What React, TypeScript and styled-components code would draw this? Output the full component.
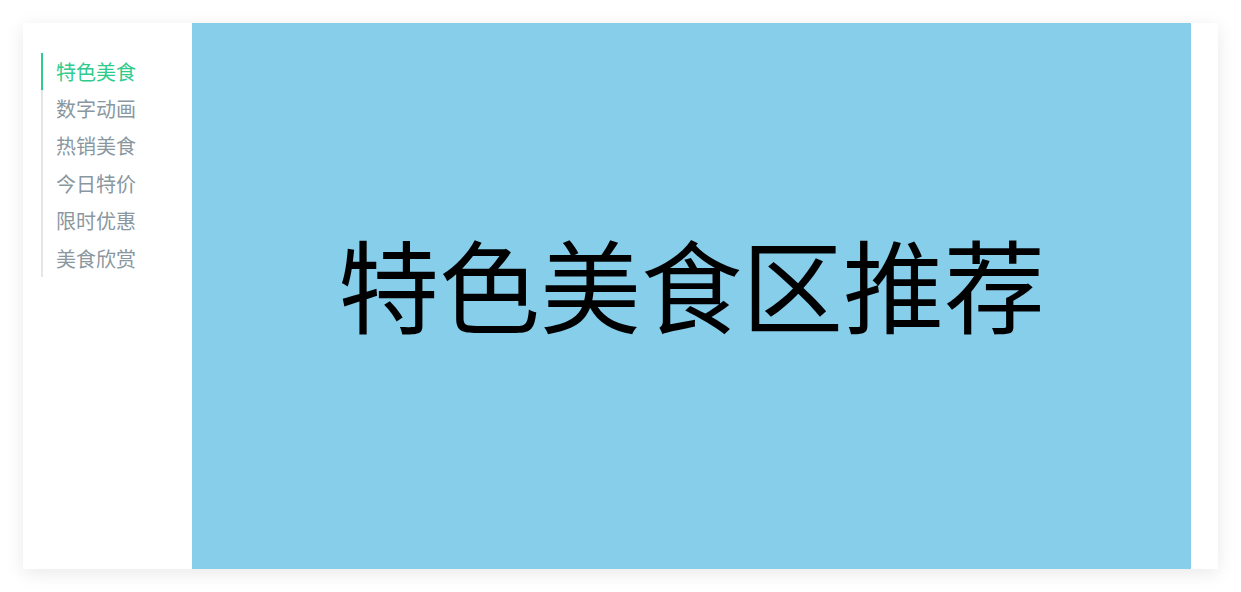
import { useState } from "react";
import styled, { createGlobalStyle } from "styled-components";

const GlobalStyle = createGlobalStyle`
    body {
        margin: 0;
        background: #ffffff;
        font-family: "Noto Sans CJK SC", "Noto Sans", sans-serif;
    }
`;

const Page = styled.div`
    padding: 23px;
`;

const Card = styled.div`
    width: 1195px;
    height: 546px;
    display: grid;
    grid-template-columns: 169px 999px;
    background-color: #ffffff;
    box-shadow: 0 4px 18px rgba(0, 0, 0, 0.09);
`;

const Side = styled.aside`
    padding: 30px 0 0 18px;
`;

const Nav = styled.nav`
    display: flex;
    flex-direction: column;
    border-left: 2px solid #e3e5e7;
`;

const NavItem = styled.a<{ $active: boolean }>`
    height: 37.4px;
    display: flex;
    align-items: center;
    padding-left: 13px;
    margin-left: -2px;
    border-left: 2px solid ${(p) => (p.$active ? "#2ecb8c" : "transparent")};
    color: ${(p) => (p.$active ? "#2ecb8c" : "#8a979f")};
    font-size: 20px;
    line-height: 1;
    text-decoration: none;
    cursor: pointer;
`;

const Panel = styled.section`
    background-color: #87ceeb;
    display: flex;
    align-items: center;
    justify-content: center;
`;

const Title = styled.h1`
    margin: 0 0 28px;
    font-size: 101px;
    font-weight: 400;
    color: #000000;
    line-height: 1;
`;

const items = ["特色美食", "数字动画", "热销美食", "今日特价", "限时优惠", "美食欣赏"];

function App() {
    const [active, setActive] = useState(0);

    return (
        <Page>
            <GlobalStyle />
            <Card>
                <Side>
                    <Nav>
                        {items.map((name, i) => (
                            <NavItem key={name} $active={i === active} onClick={() => setActive(i)}>
                                {name}
                            </NavItem>
                        ))}
                    </Nav>
                </Side>
                <Panel>
                    <Title>{items[active]}区推荐</Title>
                </Panel>
            </Card>
        </Page>
    );
}

export default App;
